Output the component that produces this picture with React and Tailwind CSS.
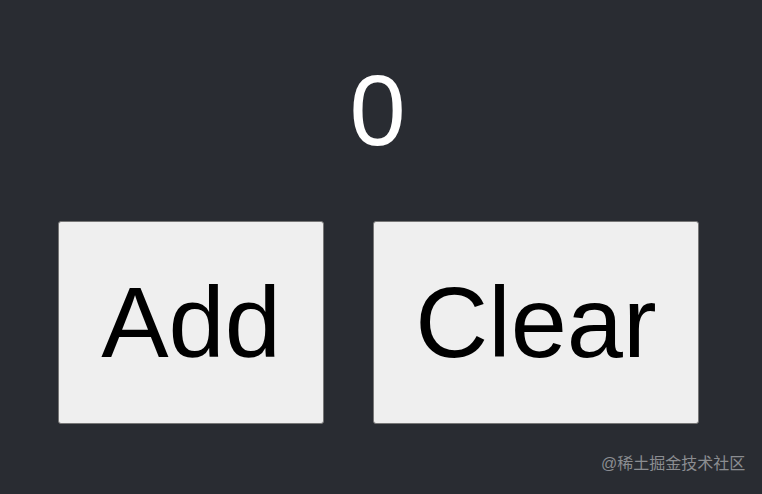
export default function App() {
  return (
    <div className="relative w-[762px] h-[494px] bg-[#292c32] font-['Liberation_Sans',Arial,sans-serif] overflow-hidden">
      <div className="pt-[60px] pl-[58px] w-[697px] text-center text-white text-[101px] leading-none">0</div>
      <div className="flex gap-[49px] pl-[58px] pt-[60px]">
        <button className="w-[266px] h-[203px] flex items-center justify-center bg-[#efefef] border border-[#767676] rounded-[3px] text-black text-[101px] leading-none">
          Add
        </button>
        <button className="w-[326px] h-[203px] flex items-center justify-center bg-[#efefef] border border-[#767676] rounded-[3px] text-black text-[101px] leading-none">
          Clear
        </button>
      </div>
      <div className="absolute left-[601px] top-[456px] text-[16px] leading-none text-[#8b8d91] font-['Liberation_Sans','Noto_Sans_CJK_SC',sans-serif]">
        @稀土掘金技术社区
      </div>
    </div>
  )
}
